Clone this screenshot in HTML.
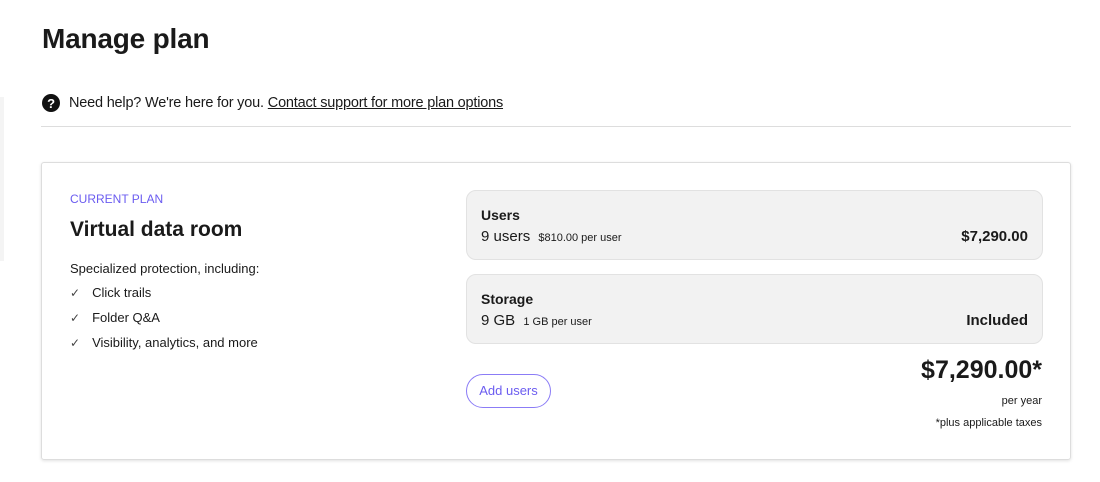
<!DOCTYPE html>
<html><head><style>
*{margin:0;padding:0;box-sizing:border-box}
body{width:1100px;height:482px;background:#fff;font-family:"Liberation Sans",sans-serif;color:#1a1a1a;position:relative;overflow:hidden}
.abs{position:absolute}
h1{position:absolute;left:42px;top:23px;font-size:28px;font-weight:bold;letter-spacing:-0.2px}
.help{left:42px;top:94px;font-size:14.5px;display:flex;align-items:center;letter-spacing:-0.2px}
.q{width:18px;height:18px;border-radius:50%;background:#111;color:#fff;font-size:13px;font-weight:bold;display:inline-flex;align-items:center;justify-content:center;margin-right:9px}
.help a{color:#1a1a1a;text-decoration:underline;margin-left:4px}
.div{left:41px;top:126px;width:1030px;height:1px;background:#ddd}
.card{left:41px;top:162px;width:1030px;height:298px;border:1px solid #ddd;border-radius:3px;box-shadow:0 1px 3px rgba(0,0,0,.12)}
.box{left:466px;width:577px;height:70px;background:#f2f2f2;border:1px solid #e2e2e2;border-radius:10px}
.box .t{position:absolute;left:14px;top:16px;font-size:14px;font-weight:bold}
.box .s{position:absolute;left:14px;top:37px;font-size:15px}
.box .s small{font-size:11px;margin-left:4px}
.box .r{position:absolute;right:14px;top:37px;font-size:15px;font-weight:bold}
li{list-style:none;position:absolute;left:70px;font-size:13px}
li:before{content:"\2713";color:#444;margin-right:12px;font-size:12px}
</style></head><body>
<div class="abs" style="left:0;top:97px;width:4px;height:164px;background:#f4f4f4"></div>
<h1>Manage plan</h1>
<div class="abs help"><span class="q">?</span>Need help? We're here for you. <a>Contact support for more plan options</a></div>
<div class="abs div"></div>
<div class="abs card"></div>
<div class="abs" style="left:70px;top:192px;font-size:12px;color:#6b5cf0">CURRENT PLAN</div>
<div class="abs" style="left:70px;top:218px;font-size:21px;font-weight:bold">Virtual data room</div>
<div class="abs" style="left:70px;top:261px;font-size:13px">Specialized protection, including:</div>
<li style="top:285px">Click trails</li>
<li style="top:310px">Folder Q&amp;A</li>
<li style="top:335px">Visibility, analytics, and more</li>
<div class="abs box" style="top:190px"><div class="t">Users</div><div class="s">9 users <small>$810.00 per user</small></div><div class="r">$7,290.00</div></div>
<div class="abs box" style="top:274px"><div class="t">Storage</div><div class="s">9 GB <small>1 GB per user</small></div><div class="r">Included</div></div>
<div class="abs" style="left:466px;top:374px;width:85px;height:34px;border:1px solid #8b7cf6;border-radius:17px;color:#6b5cf0;font-size:13px;text-align:center;line-height:32px">Add users</div>
<div class="abs" style="right:58px;top:356px;font-size:25px;font-weight:bold">$7,290.00*</div>
<div class="abs" style="right:58px;top:395px;font-size:11px">per year</div>
<div class="abs" style="right:58px;top:417px;font-size:11px">*plus applicable taxes</div>
</body></html>
